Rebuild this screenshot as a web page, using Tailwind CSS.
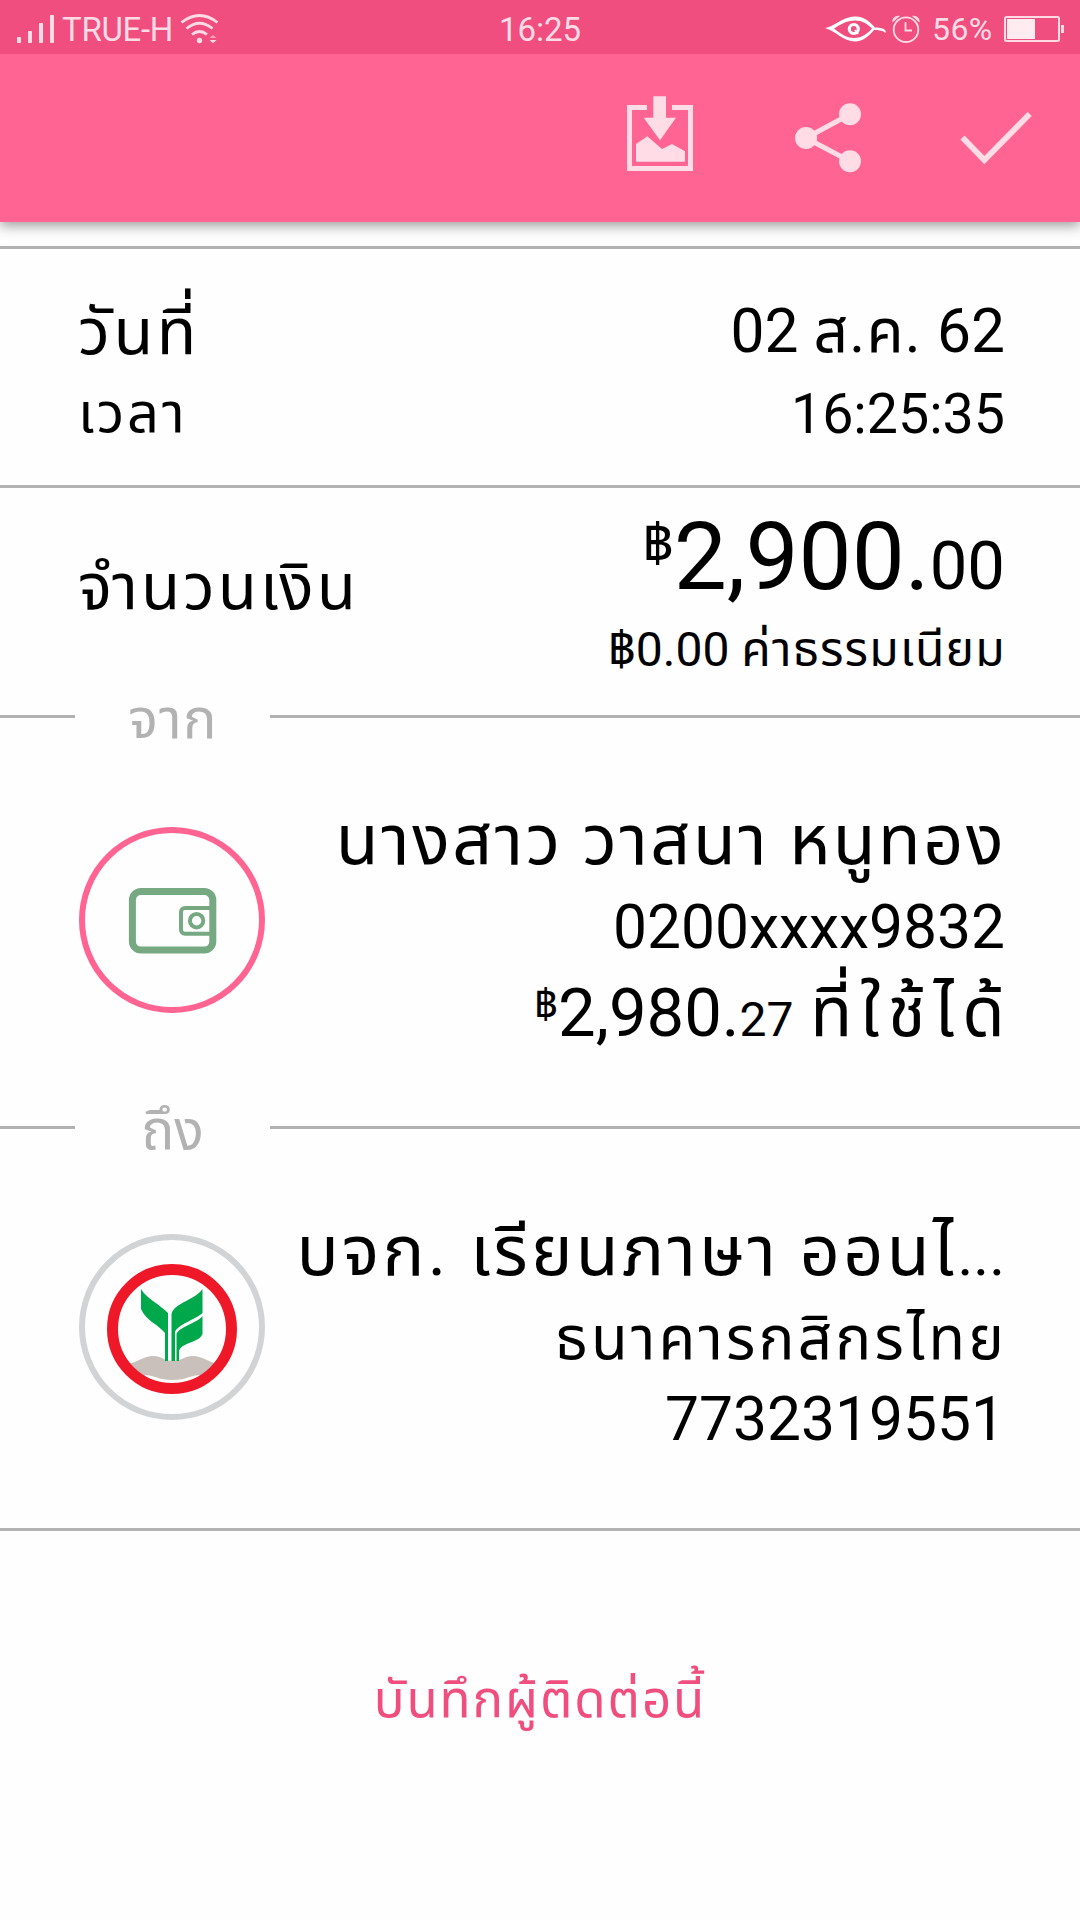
<!DOCTYPE html>
<html lang="th">
<head>
<meta charset="utf-8">
<title>รายละเอียดการโอนเงิน</title>
<script src="https://cdn.jsdelivr.net/npm/@tailwindcss/browser@4"></script>
</head>
<body class="bg-white">
<div class="flex h-[1920px] w-[1080px] flex-col overflow-hidden bg-[#fefefe] font-[Roboto,'Noto_Sans_Thai','Noto_Sans',sans-serif] text-black">

  <!-- Status bar -->
  <div class="grid h-[54px] shrink-0 grid-cols-3 items-center bg-[#f04e7e] text-[#ffdbe6]">
    <div class="flex h-full items-center pl-[17px]">
      <svg class="h-[54px] w-[37px]" viewBox="17 0 37 54" fill="currentColor"><rect x="17" y="35" width="4" height="6" rx=".8"/><rect x="28" y="29" width="4" height="12" rx=".8"/><rect x="39" y="21" width="4" height="20" rx=".8"/><rect x="50" y="13" width="4" height="28" rx=".8"/></svg>
      <span class="ml-2 w-[118px] pt-[3px] text-[33px] leading-[54px] tracking-[-.300px] whitespace-nowrap">TRUE-H</span>
      <svg class="h-[54px] w-[40px]" viewBox="180 0 40 54" fill="none" stroke="currentColor" stroke-width="2.8"><path d="M181.500 20.500 Q199.500 6.500 217.500 20.500"/><path d="M186.500 26.500 Q199.500 16 212.500 26.500"/><path d="M192 32.500 Q199.500 26.500 207 32.500"/><circle cx="199.500" cy="38.500" r="2.700" fill="currentColor" stroke="none"/><path d="M209.500 36h7l-3.500-3z" fill="currentColor" fill-opacity=".6" stroke="none"/><path d="M209.500 38h7l-3.500 3.200z" fill="currentColor" stroke="none"/></svg>
    </div>
    <div class="pt-[3px] text-center text-[33px] leading-[54px]">16:25</div>
    <div class="flex h-full items-center justify-end pr-[14px]">
      <svg class="h-[54px] w-[64px]" viewBox="824 0 64 54" fill="none" stroke="#fff"><path d="M825 26 C834 25 842 14.500 855 14.500 C865 14.500 871 21 875 25.500 C880 25.500 886 26 886 31 C882 28 878 28 874 28 C869 34 863 39.500 855 39.500 C843 39.500 836 29 825 26Z M834 26.500 C840 31 846 36 854 36 C862 36 868 31 872 26.500 C867 21.500 862 18.500 855 18.500 C846 18.500 841 22.500 834 26.500Z" fill="#fff" fill-rule="evenodd" stroke="none"/><circle cx="853.800" cy="27" r="4.500" stroke-width="3.200"/><path d="M855 28l3 4" stroke-width="2"/></svg>
      <svg class="ml-[3px] h-[54px] w-[30px]" viewBox="891 0 30 54" fill="none" stroke="currentColor" stroke-width="1.800"><circle cx="906" cy="27.700" r="12.300"/><path d="M905.500 20v8.500h6.500"/><path d="M892.500 20.500c-1-4 3-7.500 7.500-6.500zM919.500 20.500c1-4-3-7.500-7.500-6.500z" fill="currentColor" stroke="none"/></svg>
      <span class="ml-[11px] w-[72px] text-[32px] leading-[54px] tracking-[.400px]">56%</span>
      <svg class="h-[54px] w-[62px]" viewBox="1004 0 62 54"><rect x="1005" y="15" width="54" height="24" rx="1.500" fill="none" stroke="#ffdbe6" stroke-width="2"/><rect x="1007" y="17" width="28" height="20" fill="#ffecf1"/><rect x="1061" y="23" width="3" height="8" fill="#ffdbe6"/></svg>
    </div>
  </div>

  <!-- App bar -->
  <header class="z-10 flex h-[168px] shrink-0 items-start justify-end bg-[#ff6493] pt-[42px] pr-12 text-[#ffdce6] shadow-[0_4px_12px_rgba(0,0,0,0.38)] [clip-path:inset(0_0_-24px_0)]">
    <svg class="h-[75px] w-[66px]" viewBox="0 0 66 75" fill="currentColor"><path d="M0 9h20v5H5v56h56V14H45V9h21v66H0z"/><path d="M26.300.3H39v21.400h10L33 44.300 16.700 21.700h9.600z"/><path d="M9 48l11.300-7.700L35 53l10-5 13 7.300v10.400H9z"/></svg>
    <svg class="mt-[7px] ml-[102px] h-[70px] w-[66px]" viewBox="0 0 66 70" fill="currentColor"><path d="M55 11.300L11 35l44 23.300" fill="none" stroke="currentColor" stroke-width="5"/><circle cx="11" cy="35" r="11"/><circle cx="55" cy="11.300" r="11"/><circle cx="55" cy="58.300" r="11"/></svg>
    <svg class="mt-4 ml-[99px] h-[54px] w-[72px]" viewBox="960 112 72 54" fill="none" stroke="currentColor" stroke-width="5.800"><path d="M962.500 137.500L984.300 160L1029.700 114"/></svg>
  </header>

  <main class="flex flex-col pt-6">
    <!-- Date and time -->
    <section class="flex h-[239px] justify-between border-t-[3px] border-[#b2b2b2] pr-[75px] pl-[78px]">
      <div class="pt-[43px]">
        <div class="text-[65px] leading-[80px] tracking-[3.500px]">วันที่</div>
        <div class="mt-[3px] text-[56px] leading-[76px] tracking-[2.800px]">เวลา</div>
      </div>
      <div class="pt-[43px] text-right">
        <div class="text-[60.500px] leading-[80px]">02 <span class="tracking-[1.200px]">ส.ค.</span> 62</div>
        <div class="mt-[5px] text-[55.500px] leading-[76px]">16:25:35</div>
      </div>
    </section>

    <!-- Amount -->
    <section class="flex h-[228px] justify-between border-t-[3px] border-[#b2b2b2] pr-[75px] pl-[78px]">
      <div class="pt-[60px] text-[64px] leading-[80px] tracking-[3px]">จำนวนเงิน</div>
      <div class="text-right">
        <div class="pt-[9px] text-[94.500px] leading-[120px] whitespace-nowrap"><span class="align-[27px] text-[54px] leading-[0]">฿</span>2,900.<span class="text-[67px] leading-[0]">00</span></div>
        <div class="mt-[3px] text-[48px] leading-[60px] whitespace-nowrap">฿0.00 <span class="-mr-px tracking-[1.200px]">ค่าธรรมเนียม</span></div>
      </div>
    </section>

    <!-- From -->
    <div class="flex h-[7px] items-center">
      <div class="h-[3px] w-[75px] bg-[#b2b2b2]"></div>
      <div class="w-[195px] pt-[5px] pl-px text-center text-[56px] leading-[7px] tracking-[1.200px] text-[#b2b2b2]">จาก</div>
      <div class="h-[3px] flex-1 bg-[#b2b2b2]"></div>
    </div>
    <section class="flex h-[404px] justify-between pr-[75px] pl-[79px]">
      <div class="mt-[107px] flex size-[186px] shrink-0 items-center justify-center rounded-full border-[6px] border-[#ff6493]">
        <svg class="size-[174px]" viewBox="85 833 174 174" fill="none" stroke="#76a982"><rect x="132.400" y="891.500" width="80.400" height="58.600" rx="8.500" stroke-width="7"/><path d="M210 908h-25a4 4 0 0 0-4 4v17.700a4 4 0 0 0 4 4h25" stroke-width="4"/><circle cx="196.600" cy="920.700" r="6.700" stroke-width="4"/></svg>
      </div>
      <div class="pt-[80px] text-right">
        <div class="-mr-px text-[70px] leading-[80px] tracking-[2.500px] whitespace-nowrap">นางสาว วาสนา หนูทอง</div>
        <div class="mt-[8px] text-[60.500px] leading-[80px]">0200xxxx9832</div>
        <div class="-mr-[8px] mt-[5px] text-[67px] leading-[80px] whitespace-nowrap"><span class="align-[18px] text-[41px] leading-[0]">฿</span>2,980.<span class="text-[48px] leading-[0]">27</span> <span class="text-[69px] leading-[0] tracking-[8.200px]">ที่ใช้ได้</span></div>
      </div>
    </section>

    <!-- To -->
    <div class="flex h-[7px] items-center">
      <div class="h-[3px] w-[75px] bg-[#b2b2b2]"></div>
      <div class="w-[195px] pt-[5px] text-center text-[55px] leading-[7px] text-[#b2b2b2]">ถึง</div>
      <div class="h-[3px] flex-1 bg-[#b2b2b2]"></div>
    </div>
    <section class="flex h-[400px] justify-between border-b-[3px] border-[#b2b2b2] pr-[75px] pl-[79px]">
      <div class="mt-[103px] flex size-[186px] shrink-0 items-center justify-center rounded-full border-[6px] border-[#d1d3d5]">
        <svg class="size-[174px]" viewBox="85 1240 174 174"><path d="M128 1364 C138 1362 144 1356 153 1356 C162 1356 164 1361 173 1361 C182 1361 184 1356 193 1356 C202 1356 208 1362 218 1364 L206 1377 C192 1372 192 1380 172 1380 C154 1380 152 1372 140 1377Z" fill="#c9c0bb"/><circle cx="172" cy="1329" r="59.500" fill="none" stroke="#ee1828" stroke-width="11"/><g fill="#00a84c"><path d="M141 1289 C146 1298 159 1304 168 1313V1361h-3V1333C158 1324 146 1321 141 1309Z"/><path d="M202.500 1289 C195 1300 174 1303 171.500 1314V1361h3.500V1332C177 1325 196 1319 202.500 1313Z"/><path d="M202.500 1316 C196 1324 180 1326 176.500 1334V1361h2.500V1351C182 1342 199 1343 202.500 1334Z"/></g></svg>
      </div>
      <div class="pt-[80px] text-right">
        <div class="text-[70px] leading-[80px] whitespace-nowrap"><span class="tracking-[3.300px]">บจก. เรียนภาษา ออนไ</span><span class="text-[60px] leading-[0]">...</span></div>
        <div class="-mr-[2px] mt-[8px] text-[60px] leading-[80px] tracking-[3.200px]">ธนาคารกสิกรไทย</div>
        <div class="mt-px text-[60.500px] leading-[80px]">7732319551</div>
      </div>
    </section>

    <button class="mt-[129px] self-center text-[51px] leading-[80px] tracking-[1.900px] text-[#f04e7e]">บันทึกผู้ติดต่อนี้</button>
  </main>
</div>
</body>
</html>
